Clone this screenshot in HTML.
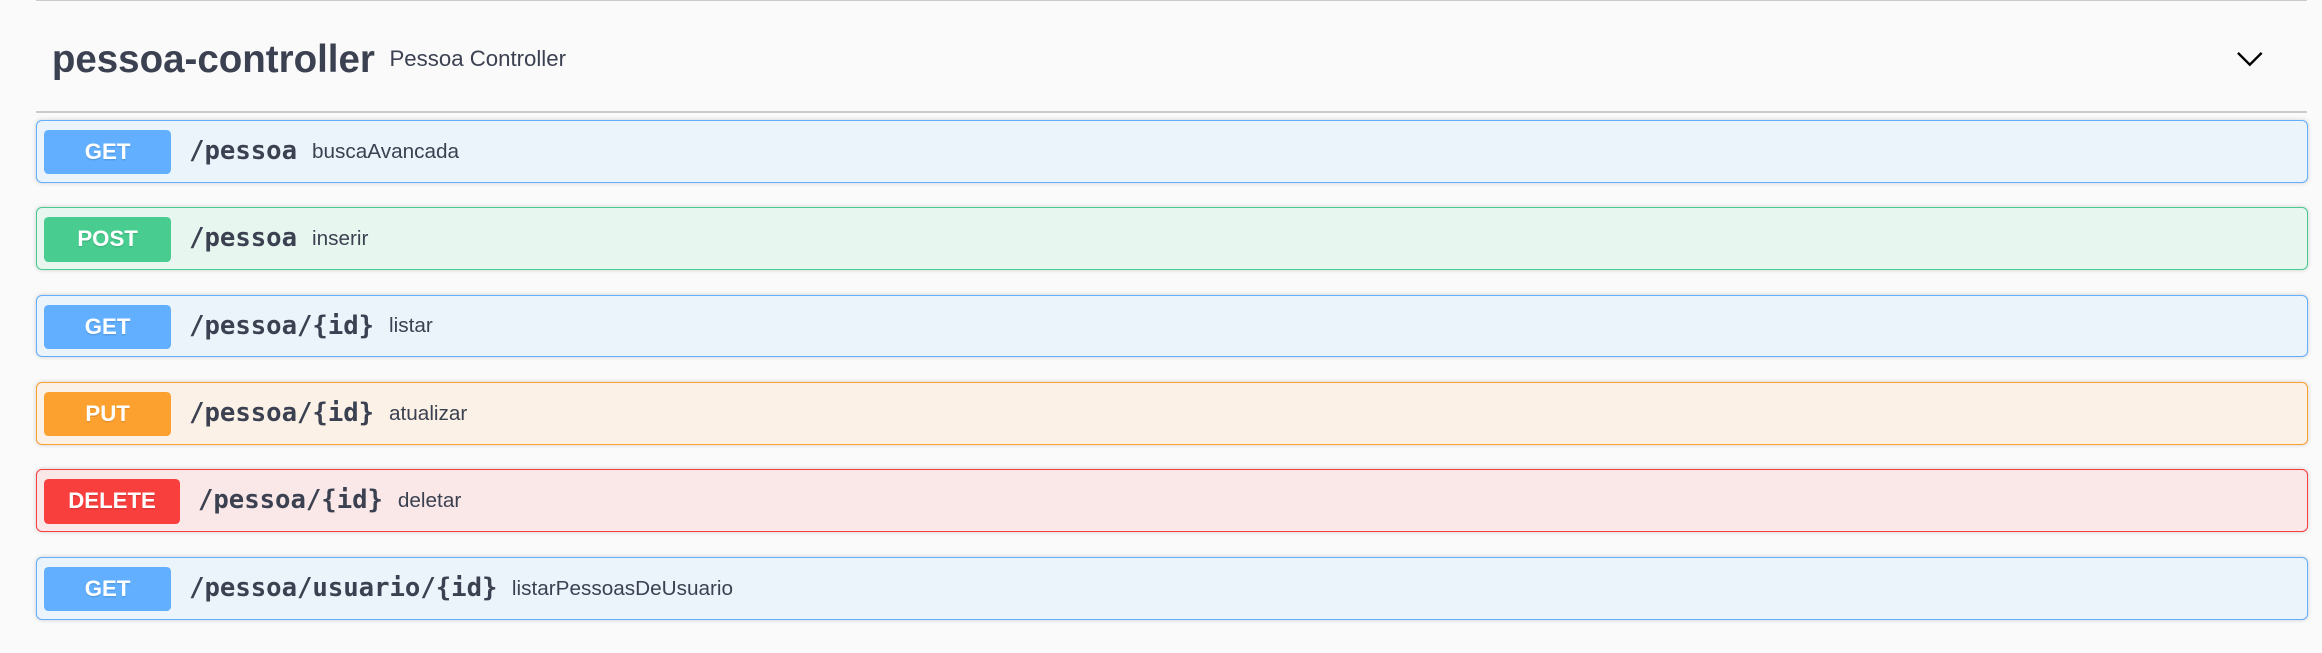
<!DOCTYPE html>
<html><head><meta charset="utf-8"><style>
html,body{margin:0;padding:0;background:#fafafa;}
body{width:2322px;height:653px;overflow:hidden;}
#w{zoom:1.481;width:1568px;height:441px;position:relative;font-family:"Liberation Sans",Arial,sans-serif;color:#3b4151;}
.hl{position:absolute;left:24px;width:1534px;height:1px;background:rgba(59,65,81,.25);}
.title{position:absolute;left:35px;top:24px;font-size:26px;font-weight:bold;line-height:32px;}
.tdesc{position:absolute;left:263px;top:31px;font-size:15px;line-height:18px;}
.chev{position:absolute;left:1509px;top:30px;}
.op{position:absolute;left:24px;width:1533px;height:41px;border:1px solid;border-radius:4px;box-shadow:0 0 3px rgba(0,0,0,.19);box-sizing:content-box;}
.m{position:absolute;left:5px;top:6px;width:86px;height:30px;border-radius:3px;color:#fff;font-weight:bold;font-size:15px;line-height:30px;text-align:center;text-shadow:0 1px 0 rgba(0,0,0,.1);}
.p{position:absolute;top:10px;font-family:"DejaVu Sans Mono","Liberation Mono",monospace;font-weight:bold;font-size:17.3px;line-height:21px;}
.d{position:absolute;top:12px;font-size:14px;line-height:18px;}
.get{border-color:#61affe;background:#ebf3fb}.get .m{background:#61affe}
.post{border-color:#49cc90;background:#e8f6f0}.post .m{background:#49cc90}
.put{border-color:#fca130;background:#fbf1e6}.put .m{background:#fca130}
.del{border-color:#f93e3e;background:#fae7e7}.del .m{background:#f93e3e;width:92px}
</style></head><body><div id="w">
<div class="hl" style="top:0"></div>
<div class="title">pessoa-controller</div>
<div class="tdesc">Pessoa Controller</div>
<svg class="chev" width="20" height="20" viewBox="0 0 20 20"><path d="M2 6l8 8 8-8" fill="none" stroke="#000" stroke-width="1.6"/></svg>
<div class="hl" style="top:75px"></div>
<div class="op get" style="top:81px"><div class="m">GET</div><div class="p" style="left:103px">/pessoa</div><div class="d" style="left:186px">buscaAvancada</div></div>
<div class="op post" style="top:140px"><div class="m">POST</div><div class="p" style="left:103px">/pessoa</div><div class="d" style="left:186px">inserir</div></div>
<div class="op get" style="top:199px"><div class="m">GET</div><div class="p" style="left:103px">/pessoa/{id}</div><div class="d" style="left:238px">listar</div></div>
<div class="op put" style="top:258px"><div class="m">PUT</div><div class="p" style="left:103px">/pessoa/{id}</div><div class="d" style="left:238px">atualizar</div></div>
<div class="op del" style="top:317px"><div class="m">DELETE</div><div class="p" style="left:109px">/pessoa/{id}</div><div class="d" style="left:244px">deletar</div></div>
<div class="op get" style="top:376px"><div class="m">GET</div><div class="p" style="left:103px">/pessoa/usuario/{id}</div><div class="d" style="left:321px">listarPessoasDeUsuario</div></div>
</div></body></html>
